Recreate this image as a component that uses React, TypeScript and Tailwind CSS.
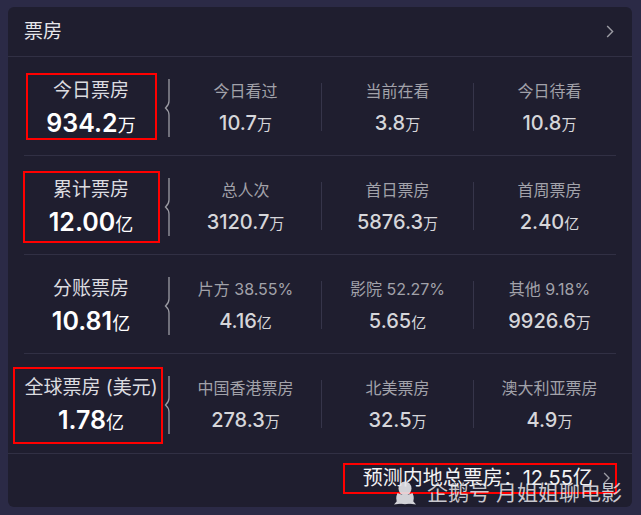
const rows = [
  {
    label: '今日票房',
    value: '934.2',
    unit: '万',
    items: [
      ['今日看过', '10.7', '万'],
      ['当前在看', '3.8', '万'],
      ['今日待看', '10.8', '万'],
    ],
  },
  {
    label: '累计票房',
    value: '12.00',
    unit: '亿',
    items: [
      ['总人次', '3120.7', '万'],
      ['首日票房', '5876.3', '万'],
      ['首周票房', '2.40', '亿'],
    ],
  },
  {
    label: '分账票房',
    value: '10.81',
    unit: '亿',
    items: [
      ['片方 38.55%', '4.16', '亿'],
      ['影院 52.27%', '5.65', '亿'],
      ['其他 9.18%', '9926.6', '万'],
    ],
  },
  {
    label: '全球票房 (美元)',
    value: '1.78',
    unit: '亿',
    items: [
      ['中国香港票房', '278.3', '万'],
      ['北美票房', '32.5', '万'],
      ['澳大利亚票房', '4.9', '万'],
    ],
  },
];

function Brace() {
  return (
    <svg width="12" height="58" viewBox="0 0 12 58" className="mt-[22px] shrink-0">
      <path
        d="M11 0 V22 Q11 26 7.5 29 Q11 32 11 36 V58"
        fill="none"
        stroke="#9c9ca4"
        strokeWidth="1.3"
      />
    </svg>
  );
}

function Chevron({ size = 12 }: { size?: number }) {
  return (
    <svg width={size * 0.6} height={size} viewBox="0 0 7 12">
      <path d="M1 1 L6 6 L1 11" fill="none" stroke="#9c9ca4" strokeWidth="1.3" />
    </svg>
  );
}

function Penguin() {
  return (
    <svg width="22" height="24" viewBox="0 0 22 24" className="opacity-90">
      <ellipse cx="11" cy="7.5" rx="6.5" ry="7" fill="#e6e6ea" />
      <path d="M3.5 12 Q1 17.5 3.5 21.5 Q11 25 18.5 21.5 Q21 17.5 18.5 12 Q11 16 3.5 12 Z" fill="#e6e6ea" />
      <path d="M3 20 L0 23.5 L8 22.5 Z M19 20 L22 23.5 L14 22.5 Z" fill="#e6e6ea" />
    </svg>
  );
}

export default function App() {
  return (
    <div className="relative w-[641px] h-[515px] bg-[#2b2a46] pt-[7px] pl-[8px] font-[Inter,'Noto_Sans_CJK_SC',sans-serif]">
      <div className="relative w-[624px] h-[500px] rounded-[6px] bg-[#1f1e2f] flex flex-col">
        <div className="h-[50px] shrink-0 flex items-center justify-between pl-4 pr-[18px] border-b border-[#313044]">
          <span className="text-[19px] text-[#e6e6ea] leading-none">票房</span>
          <Chevron size={13} />
        </div>

        <div className="px-4">
          {rows.map((row, i) => (
            <div
              key={row.label}
              className={
                'flex h-[99px] ' + (i < rows.length - 1 ? 'border-b border-[#313044]' : 'h-[98px]')
              }
            >
              <div className="w-[134px] shrink-0 flex flex-col items-center pt-[23px]">
                <div className="text-[19px] leading-[22px] text-[#dcdce0] whitespace-nowrap">
                  {row.label}
                </div>
                <div className="mt-[6px] leading-[30px] text-white font-semibold">
                  <span className="text-[25px]">{row.value}</span>
                  <span className="text-[18px] font-normal">{row.unit}</span>
                </div>
              </div>
              <Brace />
              {row.items.map(([label, value, unit], j) => (
                <div key={label} className="flex shrink-0">
                  {j > 0 && <div className="w-px h-[48px] mt-[26px] bg-[#36354a]" />}
                  <div className="w-[151px] flex flex-col items-center pt-[23px]">
                    <div className="text-[16px] leading-[22px] text-[#a2a2aa] whitespace-nowrap">
                      {label}
                    </div>
                    <div className="mt-[6px] leading-[30px] text-[#d6d6da] font-medium">
                      <span className="text-[20px]">{value}</span>
                      <span className="text-[15px] font-normal">{unit}</span>
                    </div>
                  </div>
                </div>
              ))}
            </div>
          ))}
        </div>

        <div className="h-[53px] border-t border-[#313044] flex items-center justify-end gap-[10px] pr-[22px] pb-[4px]">
          <span className="text-[20px] text-[#f2f2f4]">预测内地总票房：12.55亿</span>
          <Chevron size={12} />
        </div>

        <div className="absolute left-[18px] top-[66px] w-[131px] h-[67px] border-2 border-[#f00]" />
        <div className="absolute left-[15px] top-[164px] w-[137px] h-[72px] border-2 border-[#f00]" />
        <div className="absolute left-[5px] top-[360px] w-[150px] h-[77px] border-2 border-[#f00]" />
        <div className="absolute left-[335px] top-[456px] w-[274px] h-[31px] border-2 border-[#f00]" />
      </div>

      <div className="absolute left-[394px] top-[481px] flex items-center gap-[11px] text-[21px] leading-[24px] text-[#e8e8ec]/85">
        <Penguin />
        <span className="whitespace-nowrap">企鹅号 月姐姐聊电影</span>
      </div>
    </div>
  );
}
